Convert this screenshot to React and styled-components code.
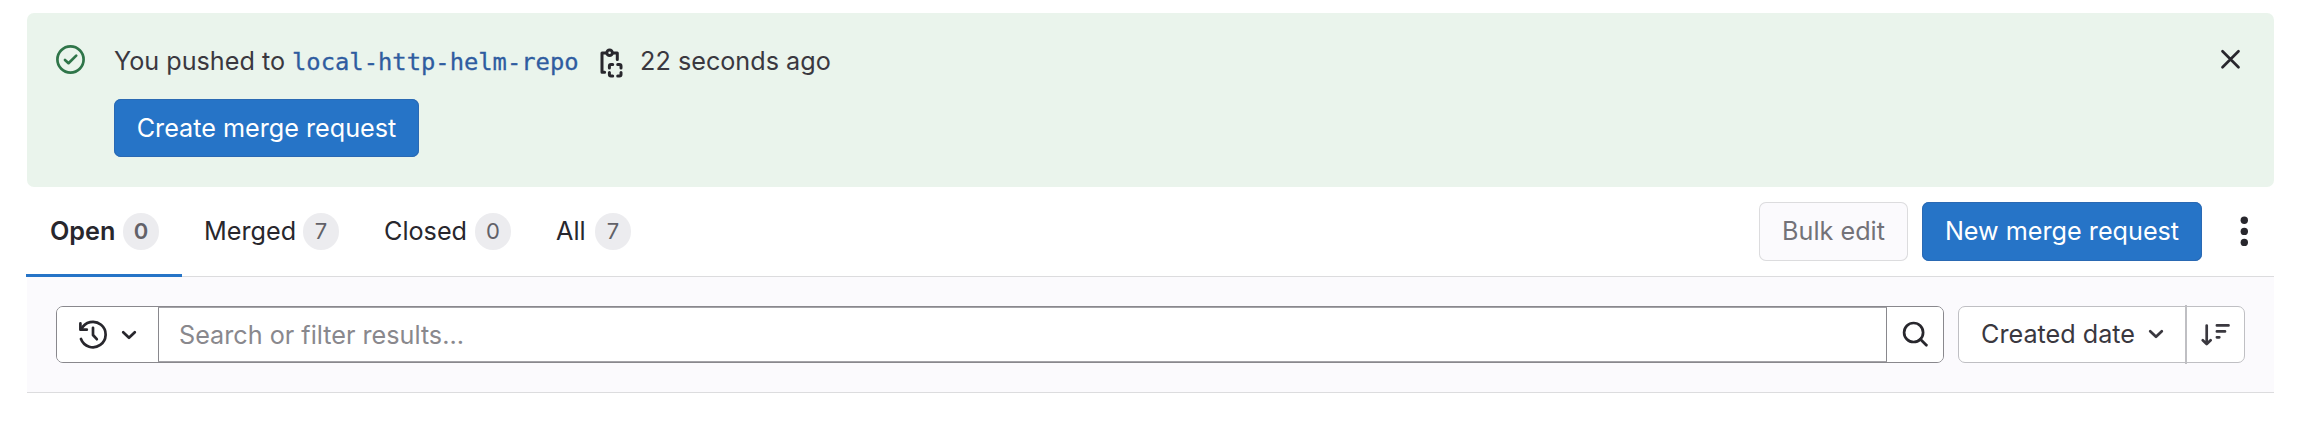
import React from "react";
import styled, { createGlobalStyle } from "styled-components";

const Global = createGlobalStyle`
  *, *::before, *::after { box-sizing: border-box; }
  body { margin: 0; background: #fff; color: #28272d; font: 400 25.2px/36px Inter, "Liberation Sans", sans-serif; }
  button, input { font: inherit; color: inherit; margin: 0; }
`;

const Page = styled.main`
  padding: 13px 24px 0 27px;
`;

const Alert = styled.section`
  display: flex;
  align-items: flex-start;
  height: 174px;
  padding: 32px 29px 0;
  border-radius: 7px;
  background: #eaf4ec;
`;

const AlertBody = styled.div`
  flex: 1;
  margin-left: 29px;
`;

const AlertText = styled.p`
  display: flex;
  align-items: center;
  height: 36px;
  margin: -2px 0 20px;
  color: #3a383f;
  white-space: pre;
`;

const Branch = styled.a`
  margin: 1px 0 0 7px;
  color: #2f5ca0;
  font: 400 23.8px/36px "DejaVu Sans Mono", monospace;
  -webkit-text-stroke: 0.3px currentColor;
`;

const Icon = styled.svg`
  display: block;
  flex: none;
  fill: none;
  stroke: currentColor;
  stroke-width: ${(p) => p.$weight || 2.7};
  stroke-linecap: round;
  stroke-linejoin: round;
  color: ${(p) => p.$color || "#28272d"};
`;

const CopyButton = styled.button`
  display: flex;
  padding: 0;
  border: 0;
  background: none;
  margin: 4px 14.5px 0 18px;
`;

const CloseButton = styled.button`
  display: flex;
  padding: 0;
  border: 0;
  background: none;
`;

const Button = styled.button`
  display: flex;
  align-items: center;
  justify-content: center;
  width: ${(p) => p.$width}px;
  height: ${(p) => p.$height || 58}px;
  padding: 0 0 ${(p) => (p.$height ? 2 : 0)}px;
  border: 0;
  border-radius: 7px;
  white-space: nowrap;
  color: ${(p) => (p.$muted ? "#737278" : "#fff")};
  background: ${(p) => (p.$muted ? "#fbfafd" : "#2674c7")};
  box-shadow: inset 0 0 0 1px ${(p) => (p.$muted ? "#dcdcde" : "#2a69b3")};
`;

const TabBar = styled.nav`
  display: flex;
  justify-content: space-between;
  height: 90px;
  border-bottom: 1px solid #dcdcde;
`;

const Tabs = styled.div`
  display: flex;
  margin-left: -1px;
`;

const Tab = styled.a`
  display: flex;
  align-items: center;
  width: ${(p) => p.$width}px;
  height: 90px;
  padding: 0 0 3px ${(p) => (p.$active ? 24 : 22)}px;
  font-weight: ${(p) => (p.$active ? 600 : 400)};
  box-shadow: ${(p) => (p.$active ? "inset 0 -3px 0 #2674c7" : "none")};
`;

const Badge = styled.span`
  display: flex;
  align-items: center;
  justify-content: center;
  width: 36px;
  height: 37px;
  margin: 1px 23px 0 auto;
  border-radius: 18px;
  background: #ececef;
  color: #626168;
  font-size: 22px;
`;

const Actions = styled.div`
  display: flex;
  gap: 14px;
  padding: 15px 25px 0 0;
`;

const MoreButton = styled.button`
  display: flex;
  align-items: center;
  height: 59px;
  padding: 0;
  border: 0;
  background: none;
  margin-left: 23px;
`;

const Dots = styled.svg`
  display: block;
  fill: #28272d;
`;

const FilterBar = styled.section`
  display: flex;
  gap: 14px;
  height: 116px;
  padding: 29px 29px 0;
  border-bottom: 1px solid #dcdcde;
  background: #fbfafd;
`;

const SearchGroup = styled.div`
  display: flex;
  flex: 1;
  height: 57px;
  border: 1px solid #89888d;
  border-radius: 7px;
  background: #fff;
  overflow: hidden;
`;

const HistoryButton = styled.button`
  display: flex;
  align-items: center;
  width: 101px;
  gap: 13px;
  padding: 0 0 0 21px;
  border: 0;
  background: #fff;
`;

const SearchInput = styled.input`
  flex: 1;
  min-width: 0;
  padding: 0 20px;
  border: 1px solid #89888d;
  border-top-color: #a4a3a8;
  border-bottom-color: #a4a3a8;
  outline: 0;
  background: #fff;
  &::placeholder { color: #89888d; opacity: 1; }
`;

const SearchButton = styled.button`
  display: flex;
  align-items: center;
  justify-content: center;
  width: 56px;
  padding: 0;
  border: 0;
  background: #fff;
`;

const SortGroup = styled.div`
  display: flex;
  width: 287px;
  height: 57px;
  border: 1px solid #bfbfc3;
  border-radius: 7px;
  background: #fff;
`;

const SortField = styled.button`
  display: flex;
  align-items: center;
  justify-content: space-between;
  width: 226px;
  padding: 0 21px 1px 22px;
  border: 0;
  background: none;
  color: #3a383f;
  white-space: nowrap;
`;

const SortDirection = styled.button`
  display: flex;
  align-items: center;
  justify-content: center;
  flex: 1;
  height: 59px;
  margin: -2px 0;
  padding: 0 0 1px;
  border: 0;
  border-left: 2px solid #bfbfc3;
  background: none;
`;

const Chevron = ({ color }) => (
  <Icon width="16" height="12" viewBox="0 0 16 12" $color={color}>
    <path d="M2.2 3.2 8 8.8l5.8-5.6" />
  </Icon>
);

const tabs = [
  { label: "Open", count: 0, width: 156, active: true },
  { label: "Merged", count: 7, width: 180 },
  { label: "Closed", count: 0, width: 172 },
  { label: "All", count: 7, width: 120 },
];

export default function App() {
  return (
    <>
      <Global />
      <Page>
        <Alert>
          <Icon width="29" height="29" viewBox="0 0 29 29" $color="#2f7549">
            <circle cx="14.5" cy="14.5" r="13.1" />
            <path d="m9 15 3.5 3.2 7.7-7.6" />
          </Icon>
          <AlertBody>
            <AlertText>
              You pushed to
              <Branch>local-http-helm-repo</Branch>
              <CopyButton aria-label="Copy branch name">
                <Icon width="29" height="30" viewBox="0 0 29 30" $weight={3}>
                  <path d="M8.6 4.9H5v19.3h2.6M16.6 4.9h3.7v6.6" />
                  <circle cx="12.6" cy="4.7" r="2.8" />
                  <path d="M12.4 20v-2q0-1.5 1.5-1.5h1.8M20.7 16.5h1.8q1.5 0 1.5 1.5v2M24 24.4v2q0 1.5-1.5 1.5h-1.8M15.7 27.9h-1.8q-1.5 0-1.5-1.5v-2" />
                </Icon>
              </CopyButton>
              22 seconds ago
            </AlertText>
            <Button $width={305}>Create merge request</Button>
          </AlertBody>
          <CloseButton aria-label="Dismiss">
            <Icon width="29" height="29" viewBox="0 0 29 29">
              <path d="m6.5 6.3 16 16M22.5 6.3l-16 16" />
            </Icon>
          </CloseButton>
        </Alert>

        <TabBar>
          <Tabs>
            {tabs.map((t) => (
              <Tab key={t.label} $width={t.width} $active={t.active}>
                {t.label}
                <Badge>{t.count}</Badge>
              </Tab>
            ))}
          </Tabs>
          <Actions>
            <Button $width={149} $height={59} $muted>Bulk edit</Button>
            <Button $width={280} $height={59}>New merge request</Button>
            <MoreButton aria-label="More actions">
              <Dots width="10" height="36" viewBox="0 0 10 36">
                <circle cx="5.3" cy="6.3" r="3.7" />
                <circle cx="5.3" cy="17.4" r="3.7" />
                <circle cx="5.3" cy="28.4" r="3.7" />
              </Dots>
            </MoreButton>
          </Actions>
        </TabBar>

        <FilterBar>
          <SearchGroup>
            <HistoryButton aria-label="Recent searches">
              <Icon width="30" height="30" viewBox="0 0 30 30">
                <path d="M2.4 3.4v6.3h6.4" />
                <path d="M3.4 9.2A12.7 12.7 0 1 1 3 19" />
                <path d="M15 7.8V15l3.8 4.2" />
              </Icon>
              <Chevron />
            </HistoryButton>
            <SearchInput placeholder="Search or filter results…" />
            <SearchButton aria-label="Search">
              <Icon width="29" height="29" viewBox="0 0 29 29">
                <circle cx="12.6" cy="12.5" r="9.5" />
                <path d="m19.4 19.3 6 6" />
              </Icon>
            </SearchButton>
          </SearchGroup>
          <SortGroup>
            <SortField>
              Created date
              <Chevron color="#3a383f" />
            </SortField>
            <SortDirection aria-label="Sort direction">
              <Icon width="29" height="29" viewBox="0 0 29 29" $color="#3a383f">
                <path d="M5.7 5.6v18.2M1.8 20.2l3.9 3.9 3.9-3.9M15.9 5.4h11.6M15.9 11.4H24M15.9 17.3h2.4" />
              </Icon>
            </SortDirection>
          </SortGroup>
        </FilterBar>
      </Page>
    </>
  );
}
